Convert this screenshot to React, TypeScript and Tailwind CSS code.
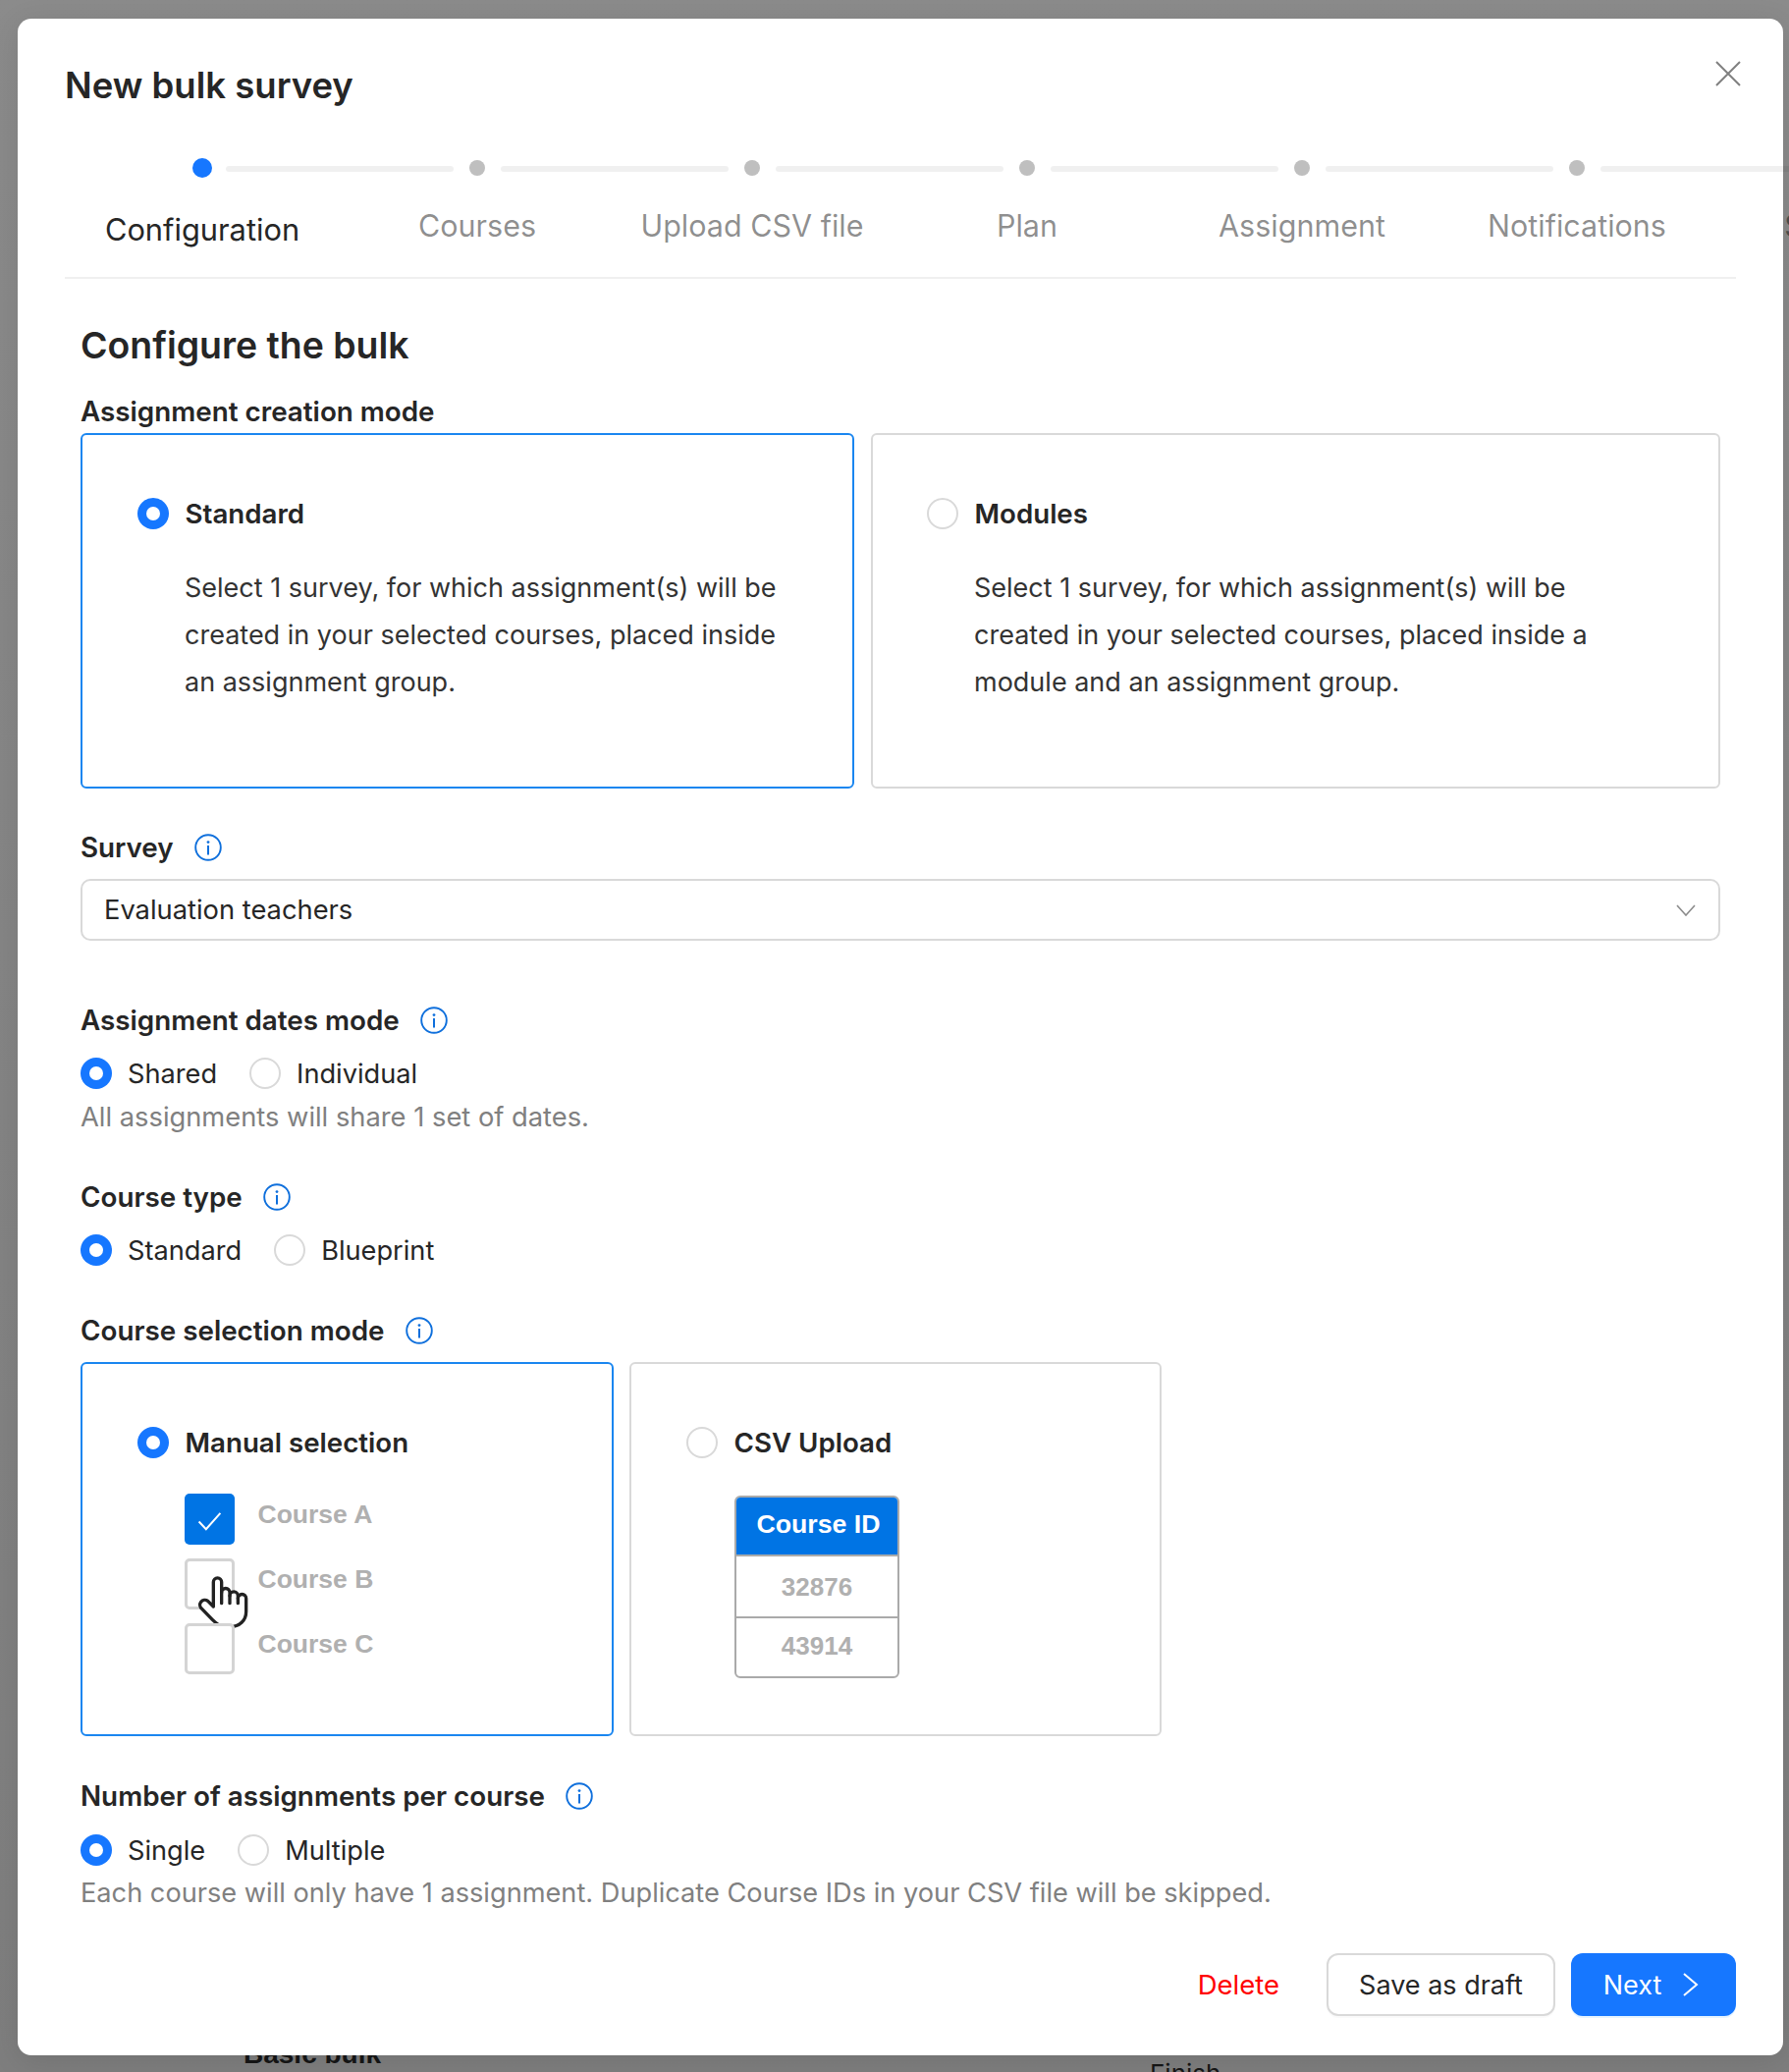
const steps = ["Configuration", "Courses", "Upload CSV file", "Plan", "Assignment", "Notifications", "Summary"];

function Radio({ checked }: { checked?: boolean }) {
  return checked ? (
    <span className="flex h-[32px] w-[32px] shrink-0 items-center justify-center rounded-full bg-[#1677ff]">
      <span className="h-[14px] w-[14px] rounded-full bg-white" />
    </span>
  ) : (
    <span className="h-[32px] w-[32px] shrink-0 rounded-full border-2 border-[#d9d9d9] bg-white" />
  );
}

function InfoIcon() {
  return (
    <svg viewBox="0 0 28 28" fill="none" className="h-[28px] w-[28px] shrink-0">
      <circle cx="14" cy="14" r="12.8" stroke="#0e6fdc" strokeWidth="1.9" />
      <circle cx="14" cy="8.6" r="1.4" fill="#0e6fdc" />
      <rect x="13" y="12" width="2" height="9.5" fill="#0e6fdc" />
    </svg>
  );
}

function HandCursor() {
  return (
    <svg viewBox="0 0 240 240" fill="none" stroke="#222222" strokeWidth="10" strokeLinecap="round" strokeLinejoin="round" className="h-[80px] w-[80px]">
      <path fill="#ffffff" d="M85 135V60A12.5 12.5 0 0 1 110 60V92A12.5 12.5 0 0 1 135 92V102A12.5 12.5 0 0 1 160 102V110A12.5 12.5 0 0 1 185 110V150C185 178 165 197 135 197H125C105 197 95 188 82 175L50 142A14 14 0 0 1 68 118Z" />
      <path d="M110 92V125M135 102V125M160 110V125" />
    </svg>
  );
}

function FieldLabel({ text }: { text: string }) {
  return (
    <div className="flex h-[40px] items-center gap-[21px] text-[27.8px] font-semibold text-[#262626]">
      <span className="pt-[2px]">{text}</span>
      <InfoIcon />
    </div>
  );
}

function RadioRow({ first, second }: { first: string; second: string }) {
  return (
    <div className="flex h-[32px] items-center gap-[33px] text-[27.2px] text-[#262626]">
      <span className="flex items-center gap-[16px]">
        <Radio checked />
        <span className="pt-[2px]">{first}</span>
      </span>
      <span className="flex items-center gap-[16px]">
        <Radio />
        <span className="pt-[2px]">{second}</span>
      </span>
    </div>
  );
}

function CardTitle({ text, checked }: { text: string; checked?: boolean }) {
  return (
    <div className="flex h-[32px] items-center gap-[16.5px] text-[27.7px] font-semibold text-[#262626]">
      <Radio checked={checked} />
      <span className="pt-[2px]">{text}</span>
    </div>
  );
}

function CheckRow({ label, checked, children }: { label: string; checked?: boolean; children?: React.ReactNode }) {
  return (
    <div className="flex items-start gap-[23.5px]">
      <div className="relative">
        {checked ? (
          <div className="flex h-[52px] w-[51px] items-center justify-center rounded-[5px] bg-[#0074e4]">
            <svg viewBox="0 0 28 22" fill="none" stroke="#ffffff" strokeWidth="2.2" className="mt-[4px] h-[20px] w-[27px]">
              <path d="M2 11.5 L10 20 L26 2" />
            </svg>
          </div>
        ) : (
          <div className="h-[52px] w-[51px] rounded-[5px] border-[3px] border-[#d4d4d4] bg-white" />
        )}
        {children}
      </div>
      <span className="h-[42px] font-['Liberation_Sans'] text-[26.5px] leading-[42px] font-bold text-[#b0b0b0]">{label}</span>
    </div>
  );
}

export default function App() {
  return (
    <div className="relative h-[2110px] w-[1822px] overflow-hidden bg-gradient-to-b from-[#8b8b8b] to-[#7e7e7e] font-['Inter',sans-serif]">
      {/* page behind the dialog */}
      <span className="absolute top-[2072px] left-[248px] font-['Liberation_Sans'] text-[28px] leading-[40px] font-bold text-[#161616]">Basic bulk</span>
      <span className="absolute top-[2094px] left-[1171px] text-[26px] leading-[36px] text-[#161616]">Finish</span>

      <div className="relative mt-[19px] ml-[18px] h-[2074px] w-[1798px] rounded-[14px] bg-white px-[48px] pt-[44px] shadow-[0_6px_30px_rgba(0,0,0,0.1)]">
        <button className="absolute top-[43px] right-[43px] text-[#808080]">
          <svg viewBox="0 0 26 26" fill="none" stroke="currentColor" strokeWidth="2" className="h-[26px] w-[26px]">
            <path d="M1 1 L25 25 M25 1 L1 25" />
          </svg>
        </button>

        <h2 className="h-[46px] pt-px text-[36.5px] leading-[46px] font-semibold text-[#262626]">New bulk survey</h2>

        <div className="mt-[52px] flex h-[123px] border-b-2 border-[#f0f0f0]">
          {steps.map((step, i) => (
            <div key={step} className="relative w-[280px] shrink-0">
              <div className="flex h-[20px] items-center justify-center">
                {i === 0 ? (
                  <span className="h-[20px] w-[20px] rounded-full bg-[#1677ff]" />
                ) : (
                  <span className="h-[16px] w-[16px] rounded-full bg-[#bfbfbf]" />
                )}
              </div>
              {i < steps.length - 1 && (
                <span className="absolute top-[8px] left-[164px] h-[6px] w-[232px] rounded-[3px] bg-black/6" />
              )}
              {i === 0 ? (
                <p className="mt-[33px] text-center text-[30.8px] leading-[40px] text-[#262626]">{step}</p>
              ) : (
                <p className="mt-[29px] text-center text-[30.5px] leading-[40px] text-black/45">{step}</p>
              )}
            </div>
          ))}
        </div>

        <div className="px-[16px]">
          <h3 className="mt-[42px] h-[50px] pt-px text-[37.4px] leading-[50px] font-semibold text-[#262626]">Configure the bulk</h3>

          <div className="mt-[23px] flex h-[40px] items-center pt-[2px] text-[27.8px] font-semibold text-[#262626]">Assignment creation mode</div>
          <div className="mt-[2px] flex h-[362px] gap-[17px]">
            <div className="w-[788px] rounded-[6px] border-2 border-[#1a86f0] pt-[64px] pl-[56px]">
              <CardTitle text="Standard" checked />
              <p className="mt-[36px] pl-[48px] text-[27px] leading-[48px] text-[#333333]">
                Select 1 survey, for which assignment(s) will be
                <br />
                created in your selected courses, placed inside
                <br />
                an assignment group.
              </p>
            </div>
            <div className="w-[865px] rounded-[6px] border-2 border-[#d9d9d9] pt-[64px] pl-[55px]">
              <CardTitle text="Modules" />
              <p className="mt-[36px] pl-[48px] text-[27px] leading-[48px] text-[#333333]">
                Select 1 survey, for which assignment(s) will be
                <br />
                created in your selected courses, placed inside a
                <br />
                module and an assignment group.
              </p>
            </div>
          </div>

          <div className="mt-[40px]">
            <FieldLabel text="Survey" />
          </div>
          <div className="mt-[12px] flex h-[63px] items-center justify-between rounded-[10px] border-2 border-[#d9d9d9] pr-[23px] pl-[22px] text-[27.3px] text-[#262626]">
            <span className="pt-[2px]">Evaluation teachers</span>
            <svg viewBox="0 0 20 12" fill="none" stroke="#8c8c8c" strokeWidth="1.6" className="h-[12px] w-[20px]">
              <path d="M1 1 L10 11 L19 1" />
            </svg>
          </div>

          <div className="mt-[61px]">
            <FieldLabel text="Assignment dates mode" />
          </div>
          <div className="mt-[18px]">
            <RadioRow first="Shared" second="Individual" />
          </div>
          <p className="mt-[9px] h-[40px] text-[27.3px] leading-[40px] text-[#808080]">All assignments will share 1 set of dates.</p>

          <div className="mt-[41px]">
            <FieldLabel text="Course type" />
          </div>
          <div className="mt-[18px]">
            <RadioRow first="Standard" second="Blueprint" />
          </div>

          <div className="mt-[46px]">
            <FieldLabel text="Course selection mode" />
          </div>
          <div className="mt-[12px] flex h-[381px] gap-[16px]">
            <div className="w-[543px] rounded-[6px] border-2 border-[#1a86f0] pt-[64px] pl-[56px]">
              <CardTitle text="Manual selection" checked />
              <div className="mt-[36px] flex flex-col gap-[14px] pl-[48px]">
                <CheckRow label="Course A" checked />
                <CheckRow label="Course B">
                  <div className="absolute top-[4px] left-[1px]">
                    <HandCursor />
                  </div>
                </CheckRow>
                <CheckRow label="Course C" />
              </div>
            </div>
            <div className="w-[542px] rounded-[6px] border-2 border-[#d9d9d9] pt-[64px] pl-[56px]">
              <CardTitle text="CSV Upload" />
              <div className="mt-[38px] ml-[49px] w-[168px] overflow-hidden rounded-[6px] border-2 border-[#aaaaaa] text-center font-['Liberation_Sans'] text-[26px] font-bold">
                <div className="flex h-[60px] items-center justify-center border-b-2 border-[#aaaaaa] bg-[#0074e4] pb-[3px] pl-[3px] text-[26.7px] text-white">Course ID</div>
                <div className="flex h-[63px] items-center justify-center border-b-2 border-[#aaaaaa] pt-[2px] text-[#b0b0b0]">32876</div>
                <div className="flex h-[59px] items-center justify-center pb-[2px] text-[#b0b0b0]">43914</div>
              </div>
            </div>
          </div>

          <div className="mt-[41px]">
            <FieldLabel text="Number of assignments per course" />
          </div>
          <div className="mt-[19px]">
            <RadioRow first="Single" second="Multiple" />
          </div>
          <p className="mt-[8px] h-[40px] text-[27.2px] leading-[40px] text-[#808080]">
            Each course will only have 1 assignment. Duplicate Course IDs in your CSV file will be skipped.
          </p>
        </div>

        <div className="mt-[41px] flex items-center justify-end">
          <button className="mr-[48px] pt-[2px] text-[27.5px] text-[#ff0000]">Delete</button>
          <button className="mr-[16px] h-[64px] w-[233px] rounded-[12px] border-2 border-[#d9d9d9] bg-white pt-[2px] text-[27px] text-[#262626] shadow-[0_2px_0_rgba(0,0,0,0.02)]">Save as draft</button>
          <button className="flex h-[64px] w-[168px] items-center justify-center gap-[22px] rounded-[12px] bg-[#1677ff] pr-[5px] text-[27px] text-white shadow-[0_2px_0_rgba(5,145,255,0.1)]">
            <span className="pt-[2px]">Next</span>
            <svg viewBox="0 0 16 24" fill="none" stroke="currentColor" strokeWidth="2" className="h-[24px] w-[16px]">
              <path d="M1 1 L14 12 L1 23" />
            </svg>
          </button>
        </div>
      </div>
    </div>
  );
}
